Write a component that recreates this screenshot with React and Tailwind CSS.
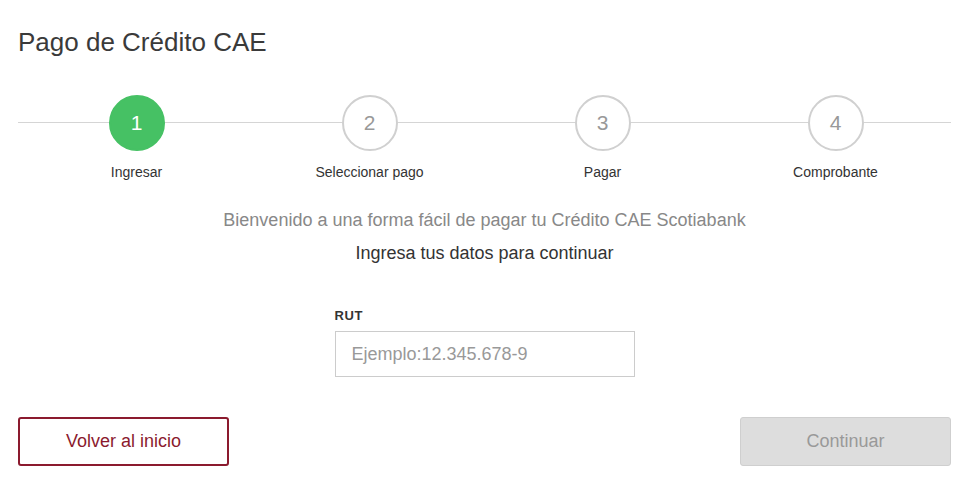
import React from "react";

const steps = [
  { n: 1, label: "Ingresar", active: true },
  { n: 2, label: "Seleccionar pago" },
  { n: 3, label: "Pagar" },
  { n: 4, label: "Comprobante" },
];

export default function App() {
  return (
    <div
      className="w-[966px] h-[480px] bg-white px-[18px] pt-[28px] overflow-hidden"
      style={{ fontFamily: '"Liberation Sans", Arial, sans-serif' }}
    >
      <h1 className="text-[26px] leading-[28px] text-[#3a3a3a] font-normal">
        Pago de Crédito CAE
      </h1>

      <div className="relative mt-[39px] w-[933px]">
        <div className="absolute left-0 right-0 top-[27px] h-px bg-[#d5d5d5]" />
        <div className="relative grid grid-cols-4 w-[932px] ml-[2px]">
          {steps.map((s) => (
            <div key={s.n} className="flex flex-col items-center">
              <div
                className={
                  s.active
                    ? "w-[56px] h-[56px] rounded-full bg-[#46c164] border-2 border-[#46c164] flex items-center justify-center text-white text-[21px]"
                    : "w-[56px] h-[56px] rounded-full bg-white border-2 border-[#d0d0d0] flex items-center justify-center text-[#999999] text-[21px]"
                }
              >
                {s.n}
              </div>
              <div className="mt-[13px] text-[14px] leading-[16px] text-[#333333]">
                {s.label}
              </div>
            </div>
          ))}
        </div>
      </div>

      <div className="w-[933px] flex flex-col items-center">
        <p className="mt-[29px] text-[18px] leading-[22px] text-[#888888]">
          Bienvenido a una forma fácil de pagar tu Crédito CAE Scotiabank
        </p>
        <p className="mt-[11px] text-[18px] leading-[22px] text-[#333333]">
          Ingresa tus datos para continuar
        </p>

        <div className="mt-[45px] w-[300px] flex flex-col">
          <label className="text-[13px] leading-[14px] font-bold text-[#333333] tracking-[0.6px]">
            RUT
          </label>
          <input
            type="text"
            placeholder="Ejemplo:12.345.678-9"
            className="mt-[8px] w-[300px] h-[46px] border border-[#cccccc] px-[16px] text-[18px] text-[#333333] placeholder:text-[#999999] outline-none"
            style={{ fontFamily: '"Liberation Sans", Arial, sans-serif' }}
          />
        </div>
      </div>

      <div className="mt-[40px] w-[933px] flex justify-between">
        <button className="w-[211px] h-[49px] border-2 border-[#8b1a2e] rounded-[3px] bg-white text-[18px] text-[#8b1a2e]">
          Volver al inicio
        </button>
        <button
          disabled
          className="w-[211px] h-[49px] border border-[#cfcfcf] rounded-[3px] bg-[#dddddd] text-[18px] text-[#999999]"
        >
          Continuar
        </button>
      </div>
    </div>
  );
}
